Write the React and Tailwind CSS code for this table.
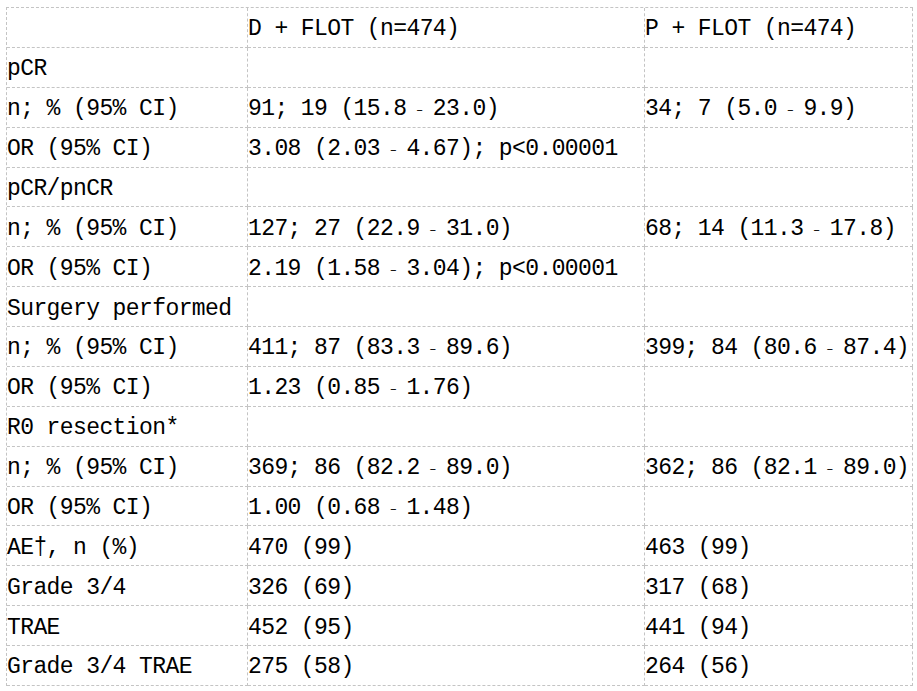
import React from "react";

const rows = [
  ["", "D + FLOT (n=474)", "P + FLOT (n=474)"],
  ["pCR", "", ""],
  ["n; % (95% CI)", "91; 19 (15.8–23.0)", "34; 7 (5.0–9.9)"],
  ["OR (95% CI)", "3.08 (2.03–4.67); p<0.00001", ""],
  ["pCR/pnCR", "", ""],
  ["n; % (95% CI)", "127; 27 (22.9–31.0)", "68; 14 (11.3–17.8)"],
  ["OR (95% CI)", "2.19 (1.58–3.04); p<0.00001", ""],
  ["Surgery performed", "", ""],
  ["n; % (95% CI)", "411; 87 (83.3–89.6)", "399; 84 (80.6–87.4)"],
  ["OR (95% CI)", "1.23 (0.85–1.76)", ""],
  ["R0 resection*", "", ""],
  ["n; % (95% CI)", "369; 86 (82.2–89.0)", "362; 86 (82.1–89.0)"],
  ["OR (95% CI)", "1.00 (0.68–1.48)", ""],
  ["AE†, n (%)", "470 (99)", "463 (99)"],
  ["Grade 3/4", "326 (69)", "317 (68)"],
  ["TRAE", "452 (95)", "441 (94)"],
  ["Grade 3/4 TRAE", "275 (58)", "264 (56)"],
];

// en dash sits in a double-width cell, like the CJK font in the source doc
function CellText({ text }) {
  const parts = text.split("–");
  return (
    <span className="whitespace-pre">
      {parts.map((p, i) => (
        <React.Fragment key={i}>
          {i > 0 && (
            <span className="relative -top-[1px] inline-block w-[26.4px] text-center text-[12px] tracking-normal">
              –
            </span>
          )}
          {p}
        </React.Fragment>
      ))}
    </span>
  );
}

export default function App() {
  return (
    <div className="min-h-screen bg-white pt-[7px] pl-[6px]">
      <div
        className="grid w-[907px] grid-cols-[241px_397px_268px] border-l border-t border-dashed border-[#c4c4c4] text-[23px] tracking-[-0.6px] text-black"
        style={{ fontFamily: '"Liberation Mono", monospace' }}
      >
        {rows.map((row, r) =>
          row.map((cell, c) => (
            <div
              key={r + "-" + c}
              className="flex h-[39.88px] items-center overflow-hidden border-b border-r border-dashed border-[#c4c4c4] pt-[5px] leading-none"
            >
              <CellText text={cell} />
            </div>
          ))
        )}
      </div>
    </div>
  );
}
